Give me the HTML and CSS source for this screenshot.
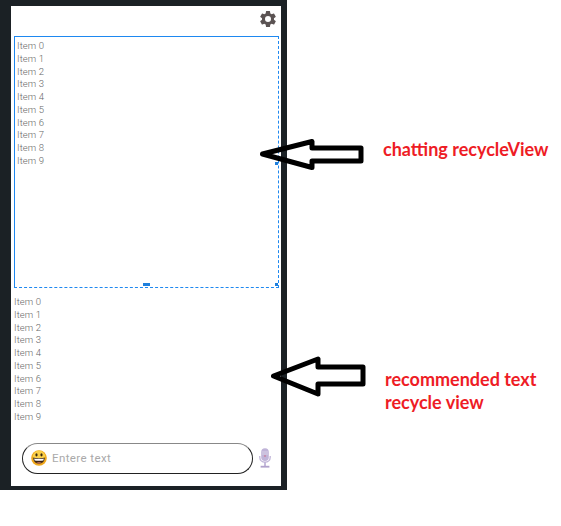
FILE: index.html
```html
<!DOCTYPE html>
<html lang="en">
<head>
<meta charset="utf-8">
<title>Chat layout</title>
<link rel="stylesheet" href="styles.css">
</head>
<body>
<div class="phone">
  <div class="screen">
    <div class="toolbar">
      <svg class="gear" viewBox="0 0 24 24"><path d="M19.14 12.94c.04-.3.06-.61.06-.94s-.02-.64-.07-.94l2.03-1.58a.49.49 0 0 0 .12-.61l-1.92-3.32a.49.49 0 0 0-.59-.22l-2.39.96c-.5-.38-1.03-.7-1.62-.94l-.36-2.54a.48.48 0 0 0-.48-.41h-3.84a.48.48 0 0 0-.47.41l-.36 2.54c-.59.24-1.13.57-1.62.94l-2.39-.96a.48.48 0 0 0-.59.22L2.74 8.87a.47.47 0 0 0 .12.61l2.03 1.58c-.05.3-.09.63-.09.94s.02.64.07.94l-2.03 1.58a.49.49 0 0 0-.12.61l1.92 3.32c.12.22.37.29.59.22l2.39-.96c.5.38 1.03.7 1.62.94l.36 2.54c.05.24.24.41.48.41h3.84c.24 0 .44-.17.47-.41l.36-2.54c.59-.24 1.13-.56 1.62-.94l2.39.96c.22.08.47 0 .59-.22l1.92-3.32a.47.47 0 0 0-.12-.61l-2.01-1.58zM12 15.6A3.6 3.6 0 1 1 12 8.4a3.6 3.6 0 0 1 0 7.2z"/></svg>
    </div>
    <div class="chat-list">
      <div class="item">Item 0</div>
      <div class="item">Item 1</div>
      <div class="item">Item 2</div>
      <div class="item">Item 3</div>
      <div class="item">Item 4</div>
      <div class="item">Item 5</div>
      <div class="item">Item 6</div>
      <div class="item">Item 7</div>
      <div class="item">Item 8</div>
      <div class="item">Item 9</div>
      <span class="handle handle-bottom"></span>
      <span class="handle handle-corner"></span>
      <span class="handle handle-right"></span>
    </div>
    <div class="recommend-list">
      <div class="item">Item 0</div>
      <div class="item">Item 1</div>
      <div class="item">Item 2</div>
      <div class="item">Item 3</div>
      <div class="item">Item 4</div>
      <div class="item">Item 5</div>
      <div class="item">Item 6</div>
      <div class="item">Item 7</div>
      <div class="item">Item 8</div>
      <div class="item">Item 9</div>
    </div>
    <div class="composer">
      <div class="input-pill">
        <svg class="emoji" viewBox="0 0 16 16">
          <circle cx="8" cy="8" r="7.8" fill="#f0a81c"/>
          <circle cx="8" cy="6.8" r="6.2" fill="#fbd049"/>
          <ellipse cx="5.5" cy="4.8" rx="1.1" ry="1.6" fill="#3a2a10"/>
          <ellipse cx="10.5" cy="4.8" rx="1.1" ry="1.6" fill="#3a2a10"/>
          <path d="M2.2 7.6c1.6.7 10 .7 11.6 0 0 3.8-2.6 6.2-5.8 6.2S2.2 11.4 2.2 7.6z" fill="#3a2412"/>
          <path d="M3.2 8.4c1.8.5 7.8.5 9.6 0l-.4 2c-2.2.5-6.6.5-8.8 0z" fill="#fff"/>
          <path d="M5.2 12.8c1.4-.8 4.2-.8 5.6 0-1.4 1-4.2 1-5.6 0z" fill="#e8826a"/>
        </svg>
        <span class="placeholder">Entere text</span>
      </div>
      <svg class="mic" viewBox="0 0 12 20">
        <rect x="2.2" y="0.3" width="7.6" height="12.8" rx="3.8" fill="#c0b4d8"/>
        <path d="M3 4h6M3 6h6" stroke="#e0d9ec" stroke-width=".8"/>
        <circle cx="6" cy="8" r=".7" fill="#d0506a"/>
        <path d="M.8 8v1.2c0 3 2.2 5 5.2 5s5.2-2 5.2-5V8" fill="none" stroke="#c0b4d8" stroke-width="1.3"/>
        <path d="M6 14v4" stroke="#c0b4d8" stroke-width="1.8"/>
        <rect x="1.6" y="17.8" width="8.8" height="1.8" fill="#b1a2cc"/>
      </svg>
    </div>
  </div>
</div>

<svg class="arrow arrow-chat" viewBox="0 0 108 36">
  <path d="M4.5 18 L54 5.5 V12 H103 V25 H54 V31.5 Z" fill="none" stroke="#000" stroke-width="5" stroke-linejoin="round"/>
</svg>
<svg class="arrow arrow-recommend" viewBox="0 0 100 46">
  <path d="M5.5 22 L50 5 V13 H95 V30 H50 V40 Z" fill="none" stroke="#000" stroke-width="5" stroke-linejoin="round"/>
</svg>
<p class="note note-chat">chatting recycleView</p>
<p class="note note-recommend">recommended text<br>recycle view</p>
</body>
</html>
```

FILE: styles.css
```css
* {
  box-sizing: border-box;
}

html,
body {
  margin: 0;
  padding: 0;
  background: #fff;
}

body {
  position: relative;
  width: 561px;
  height: 526px;
  overflow: hidden;
  font-family: Roboto, sans-serif;
}

.phone {
  width: 287px;
  height: 490px;
  padding: 6px 6px 4px 11px;
  background: #1b2125;
}

.screen {
  display: flex;
  flex-direction: column;
  height: 100%;
  background: #fff;
}

.toolbar {
  display: flex;
  justify-content: flex-end;
  height: 30px;
  padding: 3px 3px 0 0;
}

.gear {
  width: 20px;
  height: 20px;
  fill: #5b5353;
}

.chat-list {
  position: relative;
  width: 265px;
  height: 252px;
  margin-left: 3px;
  padding: 3px 0 0 2px;
  border-top: 1px solid #1e88f0;
  border-left: 1px solid #1e88f0;
  border-right: 1px dashed #1e88f0;
  border-bottom: 1px dashed #1e88f0;
}

.item {
  height: 12.75px;
  font-size: 9.5px;
  font-weight: 300;
  letter-spacing: .1px;
  line-height: 12.75px;
  color: #666;
}

.handle {
  position: absolute;
  background: #1e7fdc;
}

.handle-bottom {
  left: 128px;
  bottom: 1px;
  width: 7px;
  height: 3px;
}

.handle-corner {
  right: 0;
  bottom: 1px;
  width: 3px;
  height: 3px;
}

.handle-right {
  right: 0;
  top: 125px;
  width: 3px;
  height: 3px;
}

.recommend-list {
  margin: 8px 0 0 3px;
}

.composer {
  display: flex;
  align-items: center;
  gap: 6px;
  margin: 19px 0 0 11px;
}

.input-pill {
  display: flex;
  align-items: center;
  gap: 5px;
  width: 231px;
  height: 31px;
  padding-left: 8px;
  border: 1px solid #222;
  border-top-color: #888;
  border-radius: 16px;
}

.emoji {
  width: 16px;
  height: 16px;
}

.placeholder {
  font-size: 11.5px;
  letter-spacing: .4px;
  color: #aaa;
}

.mic {
  width: 12px;
  height: 20px;
}

.arrow {
  position: absolute;
}

.arrow-chat {
  left: 258px;
  top: 136px;
  width: 108px;
  height: 36px;
}

.arrow-recommend {
  left: 268px;
  top: 354px;
  width: 100px;
  height: 46px;
}

.note {
  position: absolute;
  margin: 0;
  font-family: Lato, sans-serif;
  font-size: 18px;
  font-weight: 700;
  line-height: 23px;
  color: #ee1c25;
}

.note-chat {
  left: 383px;
  top: 138px;
}

.note-recommend {
  left: 385px;
  top: 368px;
}
```
